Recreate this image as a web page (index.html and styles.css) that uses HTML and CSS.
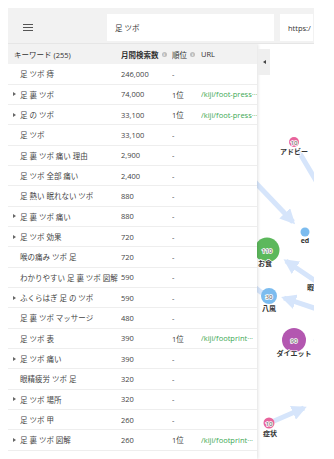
FILE: index.html
```html
<!DOCTYPE html>
<html lang="ja">
<head>
<meta charset="utf-8">
<link rel="stylesheet" href="styles.css">
</head>
<body>
<div class="app">
  <header class="topbar">
    <div class="menu"><span class="burger"><i></i><i></i><i></i></span></div>
    <div class="field search">足 ツボ</div>
    <div class="field url">https:/</div>
  </header>
  <main class="main">
    <svg class="graph" width="306" height="415" viewBox="0 0 306 415">
      <defs>
        <marker id="ah" viewBox="0 0 10 10" refX="8" refY="5" markerWidth="3" markerHeight="3" orient="auto">
          <path d="M0 0 L10 5 L0 10 z" fill="#d6e5fb"/>
        </marker>
      </defs>
      <g stroke="#d6e5fb" stroke-width="5" fill="none" stroke-linecap="butt">
        <line x1="291" y1="108" x2="310" y2="140"/>
        <line x1="225" y1="115" x2="285" y2="178" marker-end="url(#ah)"/>
        <line x1="312" y1="240" x2="278" y2="217" marker-end="url(#ah)"/>
        <line x1="312" y1="266" x2="276" y2="254" marker-end="url(#ah)"/>
        <line x1="240" y1="238" x2="254" y2="249"/>
        <line x1="320" y1="296" x2="308" y2="296" marker-end="url(#ah)"/>
        <line x1="266" y1="377" x2="296" y2="364" marker-end="url(#ah)"/>
      </g>
      <g class="nodes">
        <circle cx="286" cy="98" r="5" fill="#e8649c"/>
        <circle cx="297" cy="188" r="4.5" fill="#7cbcef"/>
        <circle cx="259" cy="206" r="12.5" fill="#5cb85c"/>
        <circle cx="261" cy="252" r="8" fill="#7cbcef"/>
        <circle cx="286" cy="296" r="12" fill="#b357b0"/>
        <circle cx="261" cy="379" r="5.5" fill="#e8649c"/>
      </g>
      <g class="num">
        <text x="286" y="100.5">10</text>
        <text x="259" y="208.5">110</text>
        <text x="261" y="254.5">30</text>
        <text x="286" y="298.5">90</text>
        <text x="261" y="381.5">10</text>
      </g>
      <g class="lbl">
        <text x="286" y="109.5">アドビー</text>
        <text x="297" y="198.5">ed</text>
        <text x="257" y="221.5">お食</text>
        <text x="302.5" y="245.5">暇</text>
        <text x="261" y="266.5">八風</text>
        <text x="286" y="311.5">ダイエット</text>
        <text x="262" y="391.5">症状</text>
      </g>
    </svg>
    <section class="panel">
      <div class="row head">
        <div class="c kw">キーワード (255)</div>
        <div class="c vol"><b>月間検索数</b><span class="info">i</span></div>
        <div class="c rank">順位<span class="info">i</span></div>
        <div class="c link">URL</div>
      </div>
      <div class="row"><div class="c kw"><span class="tg"></span>足 ツボ 痔</div><div class="c vol">246,000</div><div class="c rank">-</div><div class="c link"></div></div>
      <div class="row"><div class="c kw"><span class="tg on"></span>足 裏 ツボ</div><div class="c vol">74,000</div><div class="c rank">1位</div><div class="c link">/kiji/foot-press···</div></div>
      <div class="row"><div class="c kw"><span class="tg on"></span>足 の ツボ</div><div class="c vol">33,100</div><div class="c rank">1位</div><div class="c link">/kiji/foot-press···</div></div>
      <div class="row"><div class="c kw"><span class="tg"></span>足 ツボ</div><div class="c vol">33,100</div><div class="c rank">-</div><div class="c link"></div></div>
      <div class="row"><div class="c kw"><span class="tg"></span>足 裏 ツボ 痛い 理由</div><div class="c vol">2,900</div><div class="c rank">-</div><div class="c link"></div></div>
      <div class="row"><div class="c kw"><span class="tg"></span>足 ツボ 全部 痛い</div><div class="c vol">2,400</div><div class="c rank">-</div><div class="c link"></div></div>
      <div class="row"><div class="c kw"><span class="tg"></span>足 熱い 眠れない ツボ</div><div class="c vol">880</div><div class="c rank">-</div><div class="c link"></div></div>
      <div class="row"><div class="c kw"><span class="tg on"></span>足 裏 ツボ 痛い</div><div class="c vol">880</div><div class="c rank">-</div><div class="c link"></div></div>
      <div class="row"><div class="c kw"><span class="tg on"></span>足 ツボ 効果</div><div class="c vol">720</div><div class="c rank">-</div><div class="c link"></div></div>
      <div class="row"><div class="c kw"><span class="tg"></span>喉の痛み ツボ 足</div><div class="c vol">720</div><div class="c rank">-</div><div class="c link"></div></div>
      <div class="row"><div class="c kw"><span class="tg"></span>わかりやすい 足 裏 ツボ 図解</div><div class="c vol">590</div><div class="c rank">-</div><div class="c link"></div></div>
      <div class="row"><div class="c kw"><span class="tg on"></span>ふくらはぎ 足 の ツボ</div><div class="c vol">590</div><div class="c rank">-</div><div class="c link"></div></div>
      <div class="row"><div class="c kw"><span class="tg"></span>足 裏 ツボ マッサージ</div><div class="c vol">480</div><div class="c rank">-</div><div class="c link"></div></div>
      <div class="row"><div class="c kw"><span class="tg"></span>足 ツボ 表</div><div class="c vol">390</div><div class="c rank">1位</div><div class="c link">/kiji/footprint···</div></div>
      <div class="row"><div class="c kw"><span class="tg on"></span>足 ツボ 痛い</div><div class="c vol">390</div><div class="c rank">-</div><div class="c link"></div></div>
      <div class="row"><div class="c kw"><span class="tg"></span>眼精疲労 ツボ 足</div><div class="c vol">320</div><div class="c rank">-</div><div class="c link"></div></div>
      <div class="row"><div class="c kw"><span class="tg on"></span>足 ツボ 場所</div><div class="c vol">320</div><div class="c rank">-</div><div class="c link"></div></div>
      <div class="row"><div class="c kw"><span class="tg"></span>足 ツボ 甲</div><div class="c vol">260</div><div class="c rank">-</div><div class="c link"></div></div>
      <div class="row"><div class="c kw"><span class="tg on"></span>足 裏 ツボ 図解</div><div class="c vol">260</div><div class="c rank">1位</div><div class="c link">/kiji/footprint···</div></div>
    </section>
    <button class="tab" type="button"><span class="arrow"></span></button>
  </main>
</div>
</body>
</html>
```

FILE: styles.css
```css
html, body {
  margin: 0;
  padding: 0;
  background: #fff;
  overflow: hidden;
}
body {
  padding: 8px 0 0 8px;
  font-family: "Open Sans", "Noto Sans CJK JP", sans-serif;
  font-size: 7.5px;
  color: #444;
}
.app {
  width: 306px;
}
.topbar {
  height: 36px;
  box-sizing: border-box;
  background: #f2f2f2;
  display: flex;
  align-items: stretch;
  padding: 6px 1px 2px 0;
  border-bottom: 1px solid #e6e6e6;
}
.menu {
  width: 99px;
  display: flex;
  align-items: center;
  padding-left: 15px;
  box-sizing: border-box;
}
.burger {
  display: flex;
  flex-direction: column;
  gap: 2px;
  width: 10px;
}
.burger i {
  display: block;
  height: 1px;
  background: #555;
}
.field {
  background: #fff;
  display: flex;
  align-items: center;
  padding-left: 8px;
  box-sizing: border-box;
  font-size: 7.5px;
  color: #333;
  overflow: hidden;
  white-space: nowrap;
}
.search {
  width: 167px;
  margin-right: 6px;
}
.url {
  flex: 1;
}
.main {
  position: relative;
  height: 415px;
  overflow: hidden;
}
.graph {
  position: absolute;
  left: 0;
  top: 0;
}
.num text {
  font-size: 6px;
  fill: #777;
  text-anchor: middle;
  stroke: #fff;
  stroke-width: 1.5px;
  paint-order: stroke;
  font-weight: 600;
}
.lbl text {
  font-size: 7px;
  fill: #333;
  font-weight: 700;
  text-anchor: middle;
  stroke: #fff;
  stroke-width: 1.5px;
  paint-order: stroke;
}
.panel {
  position: relative;
  z-index: 2;
  width: 249px;
  background: #fff;
  box-shadow: 1px 0 3px rgba(0, 0, 0, 0.12);
  height: 100%;
}
.row {
  display: grid;
  grid-template-columns: 113px 51px 29px 56px;
  height: 20.33px;
  box-sizing: border-box;
  border-bottom: 1px solid #eeeeee;
  align-items: center;
  white-space: nowrap;
}
.row.head {
  background: #f2f2f2;
  color: #333;
  border-bottom: none;
}
.c {
  overflow: hidden;
}
.kw {
  display: flex;
  align-items: center;
  padding-left: 5px;
}
.head .kw {
  padding-left: 6px;
}
.head b {
  font-weight: 700;
}
.tg {
  width: 7px;
  flex: none;
  display: flex;
  align-items: center;
}
.tg.on::before {
  content: "";
  border-left: 3px solid #666;
  border-top: 2px solid transparent;
  border-bottom: 2px solid transparent;
}
.vol {
  display: flex;
  align-items: center;
}
.rank {
  display: flex;
  align-items: center;
}
.info {
  display: inline-block;
  width: 5px;
  height: 5px;
  border-radius: 50%;
  background: #bdbdbd;
  color: #fff;
  font-size: 4px;
  line-height: 5px;
  text-align: center;
  margin-left: 3px;
  font-weight: 700;
}
.link {
  color: #3ba853;
}
.head .link {
  color: #333;
}
.tab {
  position: absolute;
  z-index: 3;
  left: 250px;
  top: 5px;
  width: 12px;
  height: 26px;
  border: none;
  padding: 0;
  background: #efefef;
  display: flex;
  align-items: center;
  justify-content: center;
}
.arrow {
  border-right: 3px solid #444;
  border-top: 2.5px solid transparent;
  border-bottom: 2.5px solid transparent;
}
```
